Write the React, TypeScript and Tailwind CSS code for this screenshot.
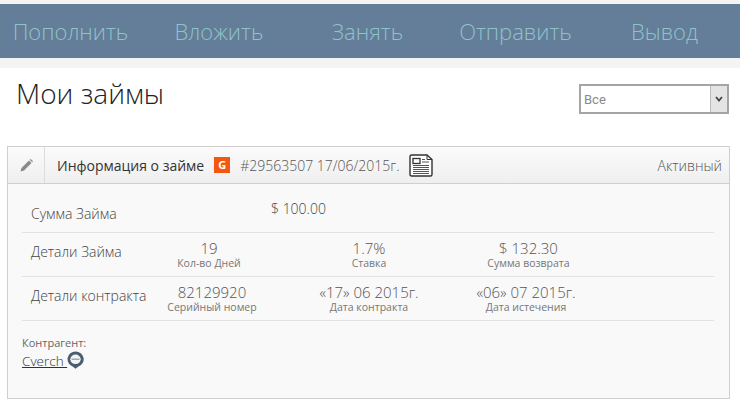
import React from 'react';

const navItems = ['Пополнить', 'Вложить', 'Занять', 'Отправить', 'Вывод'];

const PencilIcon = () => (
  <svg width="13" height="13" viewBox="0 0 14 14">
    <path d="M0.5 13.5 L1.6 9.6 L9.6 1.6 L12.4 4.4 L4.4 12.4 Z" fill="#8a8a8a" />
    <path d="M10.4 0.8 L11 0.4 Q11.6 0 12.2 0.5 L13.5 1.8 Q14 2.4 13.6 3 L13.2 3.6 Z" fill="#8a8a8a" />
  </svg>
);

const NewsIcon = () => (
  <svg width="24" height="23" viewBox="0 0 24 23" fill="none">
    <path d="M2.5 1 H18 L23 5.5 V20.5 Q23 22 21.5 22 H2.5 Q1 22 1 20.5 V2.5 Q1 1 2.5 1 Z" fill="#fff" stroke="#333" strokeWidth="1.4" />
    <path d="M18 1 V5.5 H23" stroke="#333" strokeWidth="1" />
    <rect x="4" y="4.5" width="7" height="5" fill="#fff" stroke="#333" strokeWidth="1.3" />
    <path d="M13 5.5 H16 M13 8 H20 M4 11.5 H20 M4 13.5 H20 M4 15.5 H20 M4 17.5 H20 M4 19.5 H20" stroke="#555" strokeWidth="1" />
  </svg>
);

const BubbleIcon = () => (
  <svg width="17" height="18" viewBox="0 0 17 18">
    <path d="M8.5 0.5 A8 7.8 0 0 1 11.5 15.6 L8.5 17.8 L6 15.7 A8 7.8 0 0 1 8.5 0.5 Z" fill="#4a5c70" />
    <ellipse cx="8.5" cy="8.3" rx="5.2" ry="4.8" fill="#f3f5f7" />
    <rect x="4.5" y="7.6" width="8" height="1.2" fill="#8a98a8" />
  </svg>
);

const Stat = ({ value, label }: { value: string; label: string }) => (
  <div className="flex flex-col items-center">
    <span className="text-[15px] leading-[17px] font-light text-[#555]">{value}</span>
    <span className="text-[10.5px] leading-[12px] text-[#777]">{label}</span>
  </div>
);

export default function App() {
  return (
    <div className="h-[405px] w-[740px] overflow-hidden bg-white font-['Open_Sans',sans-serif]">
      <div className="bg-[#f4f4f5] pb-[10px] pt-1">
        <nav className="grid h-[54px] grid-cols-[141px_156px_141px_155px_143px] items-center bg-[#647d98]">
          {navItems.map((item) => (
            <a key={item} className="text-center text-[22px] font-light text-[#8fc3c9]">
              {item}
            </a>
          ))}
        </nav>
      </div>

      <div className="flex items-start justify-between pl-4 pr-[11px]">
        <h1 className="mt-[6px] text-[28px] leading-[38px] font-light text-[#222]">Мои займы</h1>
        <div className="mt-4 flex h-[30px] w-[150px] items-center justify-between border-2 border-[#a5a5a5] bg-white">
          <span className="pl-[3px] pt-[1px] font-['Roboto',sans-serif] text-[13px] text-[#8a8a8a]">Все</span>
          <div className="flex h-full w-[17px] items-center justify-center border-l border-[#bbb] bg-[#e4e4e4]">
            <svg width="8" height="6" viewBox="0 0 8 6" fill="none">
              <path d="M1 1 L4 4.5 L7 1" stroke="#444" strokeWidth="1.8" />
            </svg>
          </div>
        </div>
      </div>

      <section className="mx-[7px] mt-8 h-[253px] w-[723px] border border-[#cfcfcf] bg-[#f9f9f9]">
        <header className="flex h-[37px] items-center border-b border-[#cfcfcf] bg-gradient-to-b from-[#fbfbfb] to-[#efefef]">
          <div className="flex h-full w-[37px] items-center justify-center border-r border-[#dcdcdc]">
            <PencilIcon />
          </div>
          <span className="ml-3 text-[14px] text-[#333]">Информация о займе</span>
          <span className="ml-[10px] flex h-4 w-4 items-center justify-center bg-[#f4570f] text-[11px] font-bold text-white">G</span>
          <span className="ml-[10px] text-[14px] font-light text-[#555]">#29563507 17/06/2015г.</span>
          <span className="ml-[9px] flex">
            <NewsIcon />
          </span>
          <span className="ml-auto pr-[7px] text-[14px] font-light text-[#555]">Активный</span>
        </header>

        <div className="mx-[14px] w-[692px]">
          <div className="grid h-[49px] grid-cols-[249px_1fr] items-center border-b border-[#e2e2e2] pt-[6px]">
            <span className="pl-[9px] pt-[5px] text-[14px] font-light text-[#444]">Сумма Займа</span>
            <span className="pb-[6px] text-[14px] font-light text-[#444]">$ 100.00</span>
          </div>
          <div className="grid h-[44px] grid-cols-[107px_160px_160px_159px] items-center border-b border-[#e2e2e2]">
            <span className="whitespace-nowrap pb-[6px] pl-[9px] text-[14px] font-light text-[#444]">Детали Займа</span>
            <Stat value="19" label="Кол-во Дней" />
            <Stat value="1.7%" label="Ставка" />
            <Stat value="$ 132.30" label="Сумма возврата" />
          </div>
          <div className="grid h-[44px] grid-cols-[107px_166px_148px_166px] items-center border-b border-[#e2e2e2]">
            <span className="whitespace-nowrap pb-[6px] pl-[9px] text-[14px] font-light text-[#444]">Детали контракта</span>
            <Stat value="82129920" label="Серийный номер" />
            <Stat value="«17» 06 2015г." label="Дата контракта" />
            <Stat value="«06» 07 2015г." label="Дата истечения" />
          </div>
          <div className="pt-[13px]">
            <div className="text-[11px] leading-[17px] font-medium text-[#666]">Контрагент:</div>
            <div className="flex items-start">
              <a className="whitespace-pre text-[13.5px] leading-[20px] font-light text-[#333] underline">Cverch </a>
              <span className="flex">
                <BubbleIcon />
              </span>
            </div>
          </div>
        </div>
      </section>
    </div>
  );
}
